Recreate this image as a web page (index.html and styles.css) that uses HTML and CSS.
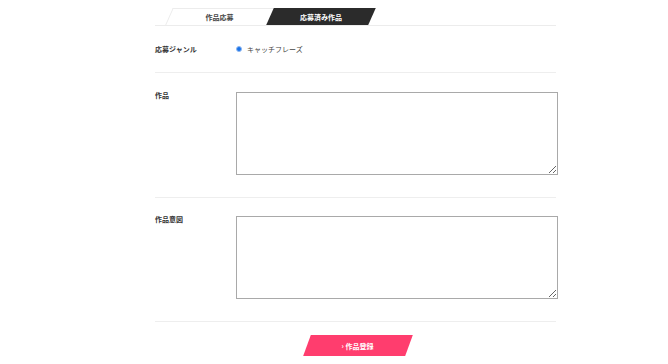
FILE: index.html
```html
<!DOCTYPE html>
<html lang="ja">
<head>
<meta charset="utf-8">
<link rel="stylesheet" href="styles.css">
</head>
<body>
<div class="page">
  <div class="tabs">
    <div class="tab tab-active"><span>作品応募</span></div>
    <div class="tab tab-dark"><span>応募済み作品</span></div>
  </div>
  <div class="row row-genre">
    <div class="label">応募ジャンル</div>
    <div class="field radio-field">
      <span class="radio"></span><span class="radio-text">キャッチフレーズ</span>
    </div>
  </div>
  <div class="row row-area">
    <div class="label">作品</div>
    <div class="field"><textarea class="area"></textarea></div>
  </div>
  <div class="row row-area row-last">
    <div class="label">作品意図</div>
    <div class="field"><textarea class="area"></textarea></div>
  </div>
  <div class="actions">
    <button class="submit"><span>› 作品登録</span></button>
  </div>
</div>
</body>
</html>
```
FILE: styles.css
```css
html, body {
  margin: 0;
  padding: 0;
  background: #fff;
}
body {
  font-family: "Noto Sans CJK JP", "Noto Sans", sans-serif;
  color: #333;
}
.page {
  margin-left: 155px;
  width: 401px;
  padding-top: 8px;
}
.tabs {
  display: flex;
  height: 17px;
  padding-left: 14px;
  border-bottom: 1px solid #ececec;
}
.tab {
  position: relative;
  height: 17px;
  display: flex;
  align-items: center;
  justify-content: center;
  font-size: 7px;
  font-weight: 600;
}
.tab::before {
  content: "";
  position: absolute;
  inset: 0;
  transform: skewX(-24deg);
  transform-origin: center;
}
.tab span {
  position: relative;
}
.tab-active {
  width: 101px;
  color: #444;
}
.tab-active::before {
  border-top: 1px solid #ececec;
  border-left: 1px solid #ececec;
  background: #fff;
}
.tab-dark {
  width: 102px;
  color: #fff;
}
.tab-dark::before {
  background: #2b2b2b;
}
.row {
  display: flex;
  border-bottom: 1px solid #eeeeee;
}
.label {
  width: 81px;
  flex: none;
  font-size: 7px;
  font-weight: 600;
  color: #333;
}
.row-genre {
  height: 46px;
  align-items: center;
}
.radio-field {
  display: flex;
  align-items: center;
}
.radio {
  box-sizing: border-box;
  width: 6px;
  height: 6px;
  border-radius: 50%;
  background: #1a73e8;
  border: 1px solid #8fb8f2;
  margin-right: 5px;
}
.radio-text {
  font-size: 7px;
  color: #444;
}
.row-area {
  padding: 19px 0 22px;
}
.row-area .label {
  line-height: 7px;
}
.field {
  flex: 1;
}
.area {
  display: block;
  box-sizing: border-box;
  width: 322px;
  height: 83px;
  margin: 0;
  border: 1px solid #a9a9a9;
  border-radius: 0;
  padding: 2px;
  resize: vertical;
  background: #fff;
}
.row-last {
  padding-top: 18px;
}
.actions {
  display: flex;
  justify-content: center;
  padding-top: 13px;
  padding-left: 4px;
}
.submit {
  position: relative;
  width: 102px;
  height: 21px;
  border: 0;
  background: transparent;
  padding: 0;
  font-family: inherit;
  font-size: 7px;
  font-weight: 600;
  color: #fff;
  cursor: pointer;
}
.submit::before {
  content: "";
  position: absolute;
  inset: 0;
  background: #ff3d6e;
  transform: skewX(-20deg);
}
.submit span {
  position: relative;
}
```
